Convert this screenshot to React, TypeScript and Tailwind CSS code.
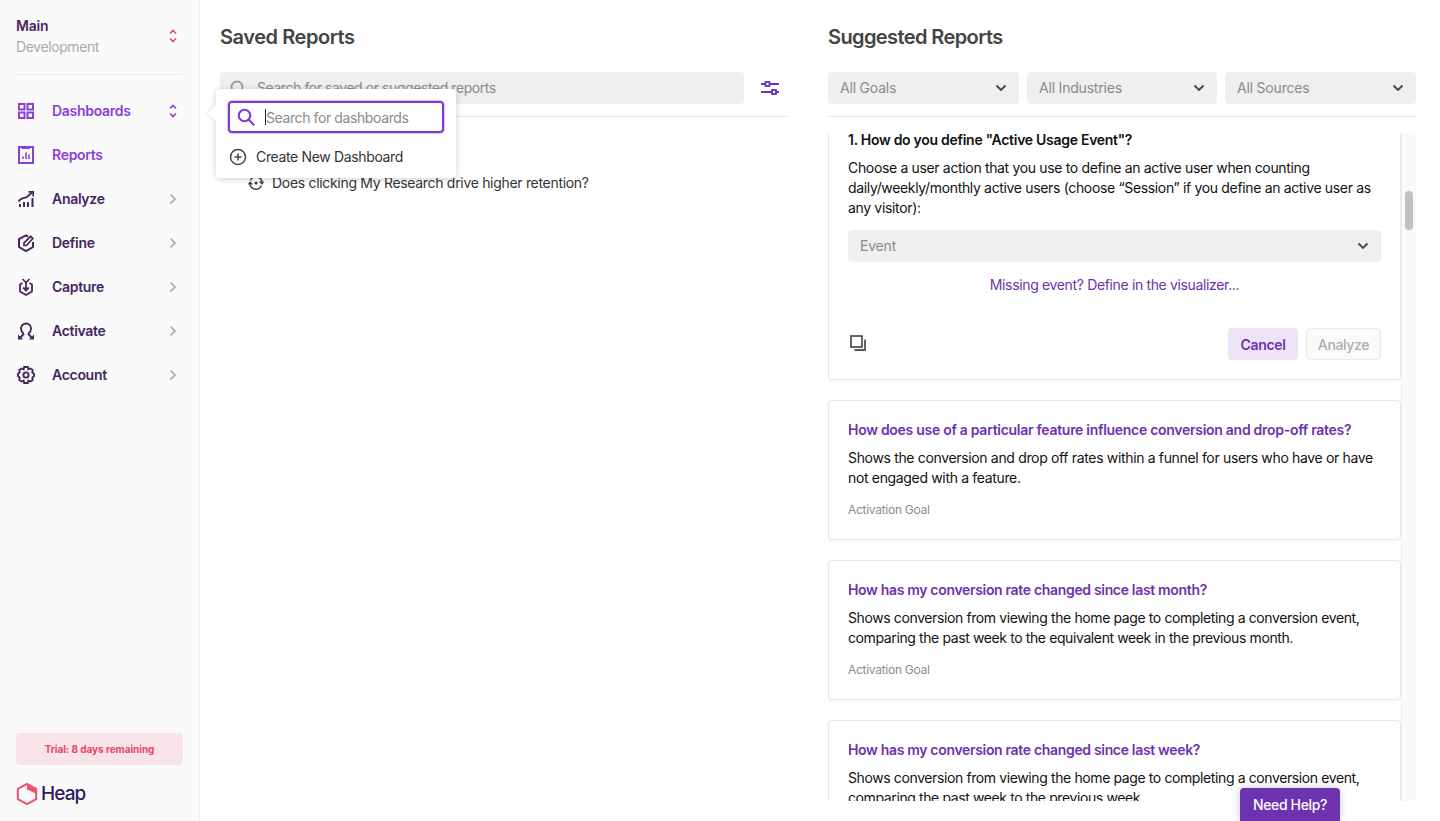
import React from "react";

const F = "font-['Inter','Liberation_Sans',sans-serif]";

function Chevrons({ color, className = "" }: { color: string; className?: string }) {
  return (
    <svg width="10" height="16" viewBox="0 0 10 16" fill="none" stroke={color} strokeWidth="1.6" className={className}>
      <path d="M2 5.500 5 2.500l3 3" />
      <path d="M2 10.500l3 3 3-3" />
    </svg>
  );
}

function ChevronRight() {
  return (
    <svg width="8" height="12" viewBox="0 0 8 12" fill="none" stroke="#a8a8a8" strokeWidth="1.7">
      <path d="M1.500 1.500 6 6l-4.500 4.500" />
    </svg>
  );
}

function ChevronDown() {
  return (
    <svg width="12" height="8" viewBox="0 0 12 8" fill="none" stroke="#444" strokeWidth="1.8">
      <path d="M1.500 1.500 6 6l4.500-4.500" />
    </svg>
  );
}

const P = "#8a3fdb";
const D = "#45275f";

const DashboardsIcon = () => (
  <svg width="20" height="20" viewBox="0 0 20 20" fill="none" stroke={P} strokeWidth="2">
    <rect x="3" y="3" width="5.500" height="5.500" />
    <rect x="11.500" y="3" width="5.500" height="5.500" />
    <rect x="3" y="11.500" width="5.500" height="5.500" />
    <rect x="11.500" y="11.500" width="5.500" height="5.500" />
  </svg>
);
const ReportsIcon = () => (
  <svg width="20" height="20" viewBox="0 0 20 20" fill="none" stroke={P} strokeWidth="2">
    <rect x="3" y="2" width="14" height="16" />
    <path d="M6 2.500h8" strokeWidth="3" />
    <path d="M7 14v-2.500M10 14V7.500M13 14V9.500" strokeWidth="1.6" />
  </svg>
);
const AnalyzeIcon = () => (
  <svg width="20" height="20" viewBox="0 0 20 20" fill="none" stroke={D} strokeWidth="1.7">
    <path d="M4 18v-3M8 18v-5M12 18v-5M16.500 18V9" strokeWidth="2" />
    <path d="M2.500 12.500C5 8 9 9.500 11 8l5-4.500" />
    <path d="M12.500 2.800h4.700V7.500" />
  </svg>
);
const DefineIcon = () => (
  <svg width="20" height="20" viewBox="0 0 20 20" fill="none" stroke={D} strokeWidth="2">
    <path d="M12 3.500 10 2.400 3 6v8l7 4 7-4V9" />
    <path d="M8 12.500v-2.600L14.600 3.300l2.200 2.200L10.400 12.500Z" strokeWidth="1.700" />
  </svg>
);
const CaptureIcon = () => (
  <svg width="20" height="20" viewBox="0 0 20 20" fill="none" stroke={D} strokeWidth="1.8">
    <path d="M6.500 6 4 7.500v7L10 18l6-3.500v-7L13.500 6" />
    <path d="M6.500 2 10 5.500 13.500 2" strokeWidth="1.600" />
    <path d="M10 6v6.500M7.200 10.500 10 13.400l2.800-2.900" />
  </svg>
);
const ActivateIcon = () => (
  <svg width="20" height="20" viewBox="0 0 20 20" fill="none" stroke={D} strokeWidth="1.9">
    <path d="M7.500 12.500C5.800 11.300 5 9.500 5 7.500a5 5 0 0 1 10 0c0 2-.8 3.800-2.500 5" />
    <path d="M8 12.500 4.500 16.500M12 12.500l3.500 4" />
    <path d="M2 13.500v5h5ZM18 13.500v5h-5Z" fill={D} stroke="none" />
  </svg>
);
const AccountIcon = () => (
  <svg width="20" height="20" viewBox="0 0 20 20" fill="none" stroke={D} strokeWidth="1.9">
    <path d="M8.200 2h3.600l.6 2.400 2-.9 2.300 1.400-.4 2.300L18 9v2l-1.700 1.800.4 2.300-2.300 1.400-2-.9-.6 2.400H8.200l-.6-2.400-2 .9-2.300-1.400.4-2.300L2 11V9l1.700-1.800-.4-2.300 2.300-1.400 2 .9Z" />
    <circle cx="10" cy="10" r="2.600" />
  </svg>
);

function NavItem({ icon, label, active, trailing }: { icon: React.ReactNode; label: string; active?: boolean; trailing?: React.ReactNode }) {
  return (
    <div className="flex h-11 items-center pl-4 pr-[21px]">
      <div className="flex w-5 justify-center">{icon}</div>
      <span className={`ml-4 flex-1 pb-px text-[14px] font-semibold tracking-[-0.3px] ${active ? "text-[#8a3fdb]" : "text-[#45275f]"}`}>{label}</span>
      <div className="flex w-[10px] justify-center">{trailing}</div>
    </div>
  );
}

function Sidebar() {
  return (
    <aside className="flex h-full w-[200px] shrink-0 flex-col border-r border-[#efefef] bg-[#fafafa]">
      <div className="mx-4 flex h-[75px] items-start justify-between border-b border-[#e9e9e9] pt-4">
        <div>
          <div className="text-[14px] leading-5 font-semibold tracking-[-0.2px] text-[#45275f]">Main</div>
          <div className="pt-px text-[14px] leading-5 tracking-[-0.4px] text-[#ababab]">Development</div>
        </div>
        <Chevrons color="#e8456b" className="mt-[12px] mr-[5px]" />
      </div>
      <nav className="mt-[14px] flex flex-col">
        <NavItem icon={<DashboardsIcon />} label="Dashboards" active trailing={<Chevrons color={P} />} />
        <NavItem icon={<ReportsIcon />} label="Reports" active />
        <NavItem icon={<AnalyzeIcon />} label="Analyze" trailing={<ChevronRight />} />
        <NavItem icon={<DefineIcon />} label="Define" trailing={<ChevronRight />} />
        <NavItem icon={<CaptureIcon />} label="Capture" trailing={<ChevronRight />} />
        <NavItem icon={<ActivateIcon />} label="Activate" trailing={<ChevronRight />} />
        <NavItem icon={<AccountIcon />} label="Account" trailing={<ChevronRight />} />
      </nav>
      <div className="mt-auto px-4 pb-[15px]">
        <div className="flex h-8 items-center justify-center rounded bg-[#f6e4e8] text-[10px] font-bold tracking-[-0.05px] text-[#ea4468]">Trial: 8 days remaining</div>
        <div className="mt-[17px] flex items-center">
          <svg width="22" height="24" viewBox="0 0 24 26" fill="none">
            <path d="M12 2 22 7.500v11L12 24 2 18.500v-11Z" stroke="#f0506e" strokeWidth="2.200" strokeLinejoin="round" />
            <path d="M12 2.500 21.500 8v4.500L12 8Z" fill="#f0506e" />
          </svg>
          <span className="ml-[3px] text-[19px] leading-6 font-medium tracking-[-0.9px] text-[#2c1a5c]">Heap</span>
        </div>
      </div>
    </aside>
  );
}

function GraySelect({ label, className = "" }: { label: string; className?: string }) {
  return (
    <div className={`flex h-8 items-center justify-between rounded bg-[#efefef] pl-3 pr-[12px] ${className}`}>
      <span className="pb-px text-[14px] tracking-[-0.2px] text-[#8a8a8a]">{label}</span>
      <ChevronDown />
    </div>
  );
}

function ReportCard({ title, lines, goal, tight }: { title: string; lines: string[]; goal?: string; tight?: boolean }) {
  return (
    <div className="h-[140px] shrink-0 rounded border border-[#e8e8e8] bg-white px-[19px] pt-[19px] shadow-[0_1px_2px_rgba(0,0,0,0.05)]">
      <div className={`text-[14px] leading-5 font-semibold text-[#6c32b0] ${tight ? "tracking-[-0.33px]" : "tracking-[-0.285px]"}`}>{title}</div>
      <div className={`mt-2 text-[14px] leading-5 text-[#111] ${tight ? "tracking-[-0.39px]" : "tracking-[-0.34px]"}`}>
        {lines.map((l) => (
          <div key={l}>{l}</div>
        ))}
      </div>
      {goal && <div className="mt-[12px] text-[12px] leading-5 tracking-[-0.28px] text-[#8c8c8c]">{goal}</div>}
    </div>
  );
}

function SavedPanel() {
  return (
    <section className="relative w-[568px] shrink-0">
      <h1 className="pt-[25px] text-[20px] leading-6 font-semibold tracking-[-0.45px] text-[#444]">Saved Reports</h1>
      <div className="mt-[23px] flex items-center border-b border-[#e8e8e8] pb-3">
        <div className="flex h-8 w-[524px] items-center rounded bg-[#efefef] pl-[10px]">
          <svg width="16" height="16" viewBox="0 0 16 16" fill="none" stroke="#999" strokeWidth="1.800">
            <circle cx="7" cy="7" r="5.500" />
            <path d="m11 11 4 4" />
          </svg>
          <span className="ml-[11px] pb-px text-[14px] tracking-[-0.43px] text-[#8a8a8a]">Search for saved or suggested reports</span>
        </div>
        <svg width="20" height="20" viewBox="0 0 20 20" fill="none" stroke="#6c32b0" strokeWidth="1.800" className="ml-4">
          <path d="M1 6h4M10 6h9M1 14h11M16 14h3" />
          <rect x="5.500" y="4" width="4" height="4" />
          <rect x="12" y="12" width="4" height="4" />
        </svg>
      </div>
      <div className="mt-[56px] flex items-center pl-[28px] text-[14px] leading-5 tracking-[-0.31px] text-[#333]">
        <svg width="16" height="16" viewBox="0 0 16 16" fill="none" stroke="#444" strokeWidth="1.500">
          <path d="M2.500 5.500A6 6 0 0 1 14 8M13.500 10.500A6 6 0 0 1 2 8" />
          <path d="M11.500 6.500 14 8.700l1.500-2.200M4.500 9.500 2 7.300.5 9.500" strokeWidth="1.300" />
          <circle cx="8" cy="8" r="1.600" fill="#444" stroke="none" />
        </svg>
        <span className="ml-2">Does clicking My Research drive higher retention?</span>
      </div>

      <div className="absolute -left-[4px] top-[89px] z-10 h-[89px] w-[240px] rounded bg-white px-3 pt-3 shadow-[0_1px_6px_rgba(0,0,0,0.2)]">
        <div className="absolute -left-[6px] top-[18px] h-3 w-3 rotate-45 bg-white shadow-[-1px_1px_2px_rgba(0,0,0,0.08)]" />
        <div className="relative flex h-8 w-[216px] items-center rounded border-2 border-[#7d3ad6] pl-[7px] shadow-[0_0_0_1px_#dcc8f5]">
          <svg width="19" height="19" viewBox="0 0 19 19" fill="none" stroke="#7d3ad6" strokeWidth="2.100">
            <circle cx="7.500" cy="7.500" r="5.800" />
            <path d="m11.800 11.800 5.400 5.400" />
          </svg>
          <span className="ml-[9px] h-4 w-px bg-[#222]" />
          <span className="text-[14px] tracking-[-0.4px] text-[#8a8a8a]">Search for dashboards</span>
        </div>
        <div className="mt-[14px] flex items-center text-[14px] leading-5 tracking-[-0.35px] text-[#333]">
          <svg width="18" height="18" viewBox="0 0 18 18" fill="none" stroke="#444" strokeWidth="1.500" className="ml-px">
            <circle cx="9" cy="9" r="7.500" />
            <path d="M9 5.500v7M5.500 9h7" />
          </svg>
          <span className="ml-[9px]">Create New Dashboard</span>
        </div>
      </div>
    </section>
  );
}

function SuggestedPanel() {
  return (
    <section className="ml-10 flex h-[801px] w-[588px] shrink-0 flex-col">
      <h2 className="pt-[25px] text-[20px] leading-6 font-semibold tracking-[-0.6px] text-[#444]">Suggested Reports</h2>
      <div className="mt-[23px] flex gap-2 border-b border-[#e8e8e8] pb-3">
        <GraySelect label="All Goals" className="w-[191px]" />
        <GraySelect label="All Industries" className="w-[190px]" />
        <GraySelect label="All Sources" className="w-[191px]" />
      </div>
      <div className="mt-4 flex min-h-0 flex-1 overflow-hidden">
        <div className="flex w-[573px] shrink-0 flex-col gap-5 overflow-hidden">
          <div className="h-[247px] shrink-0 rounded-b border border-t-0 border-[#e8e8e8] bg-white px-[19px] shadow-[0_1px_2px_rgba(0,0,0,0.05)]">
            <div className="text-[14px] leading-[14px] font-semibold tracking-[-0.285px] text-[#111]">1. How do you define "Active Usage Event"?</div>
            <div className="mt-[11px] text-[14px] leading-5 tracking-[-0.34px] text-[#111]">
              <div>Choose a user action that you use to define an active user when counting</div>
              <div>daily/weekly/monthly active users (choose “Session” if you define an active user as</div>
              <div>any visitor):</div>
            </div>
            <GraySelect label="Event" className="mt-[12px]" />
            <div className="mt-[13px] text-center text-[14px] leading-5 text-[#6c32b0]">Missing event? Define in the visualizer...</div>
            <div className="mt-[33px] flex items-center justify-between">
              <svg width="18" height="18" viewBox="0 0 18 18" fill="none" stroke="#555" strokeWidth="1.800" className="-mt-[2px] ml-px">
                <rect x="2" y="2" width="11" height="11" />
                <path d="M16 5.500V16H5.500" />
              </svg>
              <div className="flex gap-2">
                <div className="flex h-8 w-[70px] items-center justify-center rounded bg-[#ece3f6] text-[14px] font-semibold text-[#6c32b0]">Cancel</div>
                <div className="flex h-8 w-[75px] items-center justify-center rounded border border-[#e8e8e8] bg-[#fafafa] text-[14px] font-medium text-[#adadad]">Analyze</div>
              </div>
            </div>
          </div>
          <ReportCard
            title="How does use of a particular feature influence conversion and drop-off rates?"
            lines={["Shows the conversion and drop off rates within a funnel for users who have or have", "not engaged with a feature."]}
            goal="Activation Goal"
          />
          <ReportCard
            tight
            title="How has my conversion rate changed since last month?"
            lines={["Shows conversion from viewing the home page to completing a conversion event,", "comparing the past week to the equivalent week in the previous month."]}
            goal="Activation Goal"
          />
          <ReportCard
            tight
            title="How has my conversion rate changed since last week?"
            lines={["Shows conversion from viewing the home page to completing a conversion event,", "comparing the past week to the previous week."]}
          />
        </div>
        <div className="w-[15px] shrink-0 border-l border-[#eeeeee] bg-[#fafafa] pt-[58px] pl-[3px]">
          <div className="h-[39px] w-2 rounded-full bg-[#c1c1c1]" />
        </div>
      </div>
    </section>
  );
}

export default function App() {
  return (
    <div className={`relative flex h-[821px] w-[1440px] overflow-hidden bg-white ${F} tracking-[-0.35px]`}>
      <Sidebar />
      <main className="flex pl-5">
        <SavedPanel />
        <SuggestedPanel />
      </main>
      <div className="absolute bottom-0 left-[1240px] flex h-[33px] w-[100px] items-center justify-center rounded-t bg-[#6c32b0] text-[14px] font-medium text-white shadow-[0_0_8px_rgba(60,90,160,0.3)]">
        Need Help?
      </div>
    </div>
  );
}
